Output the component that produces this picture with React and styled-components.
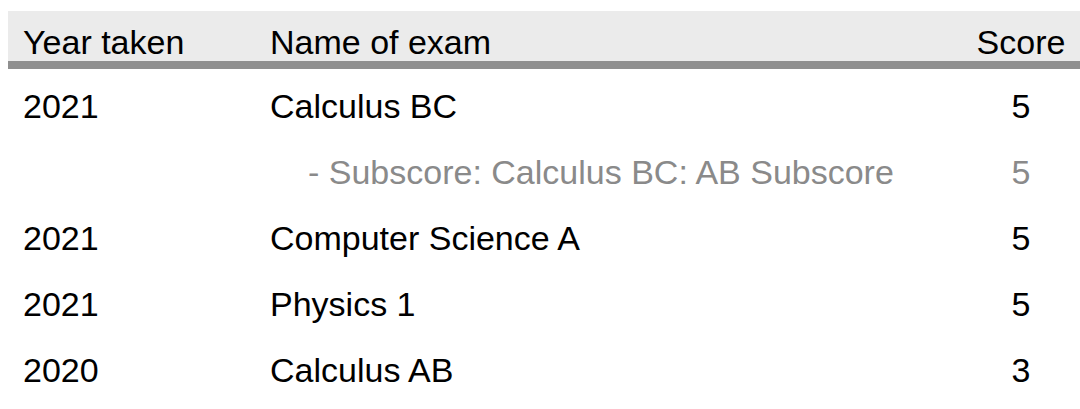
import React from "react";
import styled, { createGlobalStyle } from "styled-components";

const GlobalStyle = createGlobalStyle`
  html, body {
    margin: 0;
    padding: 0;
    background: #ffffff;
    overflow: hidden;
  }
  body {
    font-family: "Liberation Sans", Arial, Helvetica, sans-serif;
  }
`;

const Page = styled.div`
  padding: 11px 0 0 8px;
`;

const Table = styled.table`
  width: 1072px;
  border-collapse: separate;
  border-spacing: 0;
  table-layout: fixed;
  font-size: 34px;
  line-height: 38px;
  color: #000;
`;

const Th = styled.th`
  background-color: #ebebeb;
  border-bottom: 8px solid #8f8f8f;
  padding: 12px 0 0 ${(p) => p.$pad || 0}px;
  font-weight: normal;
  text-align: ${(p) => p.$align || "left"};
  white-space: nowrap;
`;

const Td = styled.td`
  padding: 18px 0 10px ${(p) => p.$pad || 0}px;
  text-align: ${(p) => p.$align || "left"};
  color: ${(p) => (p.$muted ? "#8a8a8a" : "#000")};
  white-space: nowrap;
`;

const exams = [
  {
    year: "2021",
    name: "Calculus BC",
    score: 5,
    subscores: [{ name: "Calculus BC: AB Subscore", score: 5 }]
  },
  { year: "2021", name: "Computer Science A", score: 5 },
  { year: "2021", name: "Physics 1", score: 5 },
  { year: "2020", name: "Calculus AB", score: 3 }
];

const App = () => {
  return (
    <Page>
      <GlobalStyle />
      <Table>
        <colgroup>
          <col style={{ width: 262 }} />
          <col />
          <col style={{ width: 118 }} />
        </colgroup>
        <thead>
          <tr>
            <Th $pad={15}>Year taken</Th>
            <Th>Name of exam</Th>
            <Th $align="center">Score</Th>
          </tr>
        </thead>
        <tbody>
          {exams.map((exam, i) => (
            <React.Fragment key={i}>
              <tr>
                <Td $pad={15}>{exam.year}</Td>
                <Td>{exam.name}</Td>
                <Td $align="center">{exam.score}</Td>
              </tr>
              {(exam.subscores || []).map((sub, j) => (
                <tr key={j}>
                  <Td />
                  <Td $muted $pad={38}>
                    - Subscore: {sub.name}
                  </Td>
                  <Td $muted $align="center">
                    {sub.score}
                  </Td>
                </tr>
              ))}
            </React.Fragment>
          ))}
        </tbody>
      </Table>
    </Page>
  );
};

export default App;
